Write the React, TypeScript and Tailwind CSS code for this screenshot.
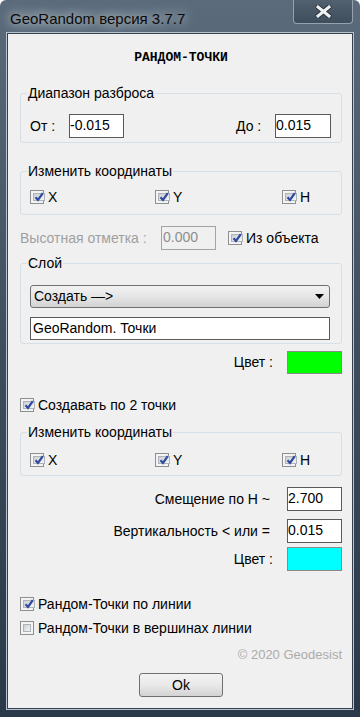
import React from "react";

function Check({ checked = true }: { checked?: boolean }) {
  return (
    <span className="w-[14px] h-[14px] border border-[#8e8f8f] bg-[#f4f4f4] p-[2px] flex shrink-0">
      <span className="flex-1 border border-[#aeb3b9] bg-gradient-to-br from-[#cbcfd5] to-[#f6f6f6] flex items-center justify-center">
        {checked && (
          <svg width="10" height="10" viewBox="0 0 10 10" className="-mt-[1px]">
            <path d="M1.5 5.2 L4 8 L8.8 1.2" fill="none" stroke="#2f4a9e" strokeWidth="2.2" />
          </svg>
        )}
      </span>
    </span>
  );
}

function Group({ title, className, children }: { title: string; className: string; children: React.ReactNode }) {
  return (
    <fieldset className="border border-[#d5dfe5] rounded-[3px]">
      <legend className="ml-[6px] px-[1px] leading-[16px]">{title}</legend>
      <div className={className}>{children}</div>
    </fieldset>
  );
}

function CoordRow() {
  return (
    <div className="flex h-[16px] pl-[9px]">
      <div className="w-[125px] flex items-center gap-[4px]">
        <Check />
        <span>X</span>
      </div>
      <div className="w-[127px] flex items-center gap-[4px]">
        <Check />
        <span>Y</span>
      </div>
      <div className="flex items-center gap-[4px]">
        <Check />
        <span>H</span>
      </div>
    </div>
  );
}

export default function App() {
  return (
    <div className="w-[360px] h-[717px] flex flex-col bg-gradient-to-b from-[#5b6b7b] via-[#3d4d5e] to-[#2a394a] rounded-t-[6px] overflow-hidden font-['Liberation_Sans',Arial,sans-serif] text-[14px] text-black">
      {/* title bar */}
      <div className="h-[32px] flex items-start">
        <div className="pl-[10px] pt-[10px] text-[15px] leading-[18px] text-[#0a0a0a] [text-shadow:0_0_10px_rgba(230,236,242,0.95),0_0_16px_rgba(230,236,242,0.7)]">
          GeoRandom версия 3.7.7
        </div>
        <div className="ml-auto mr-[7px] w-[60px] h-[24px] border border-t-0 border-[#95a3b0] rounded-b-[4px] bg-gradient-to-b from-[#52616f] to-[#3f4e5d] flex items-center justify-center">
          <svg width="17" height="13" viewBox="0 0 17 13">
            <path d="M3 2 L14 11 M14 2 L3 11" stroke="#2a3440" strokeWidth="5" strokeLinecap="round" />
            <path d="M3 2 L14 11 M14 2 L3 11" stroke="#eef0f2" strokeWidth="3" strokeLinecap="square" />
          </svg>
        </div>
      </div>

      {/* client */}
      <div className="mx-[6px] border border-[#b7c4cf]">
        <div className="border border-[#34414f]">
          <div className="h-[674px] bg-[#f0f0f0] flex flex-col pl-[12px] pr-[10px]">
            <div className="mt-[16px] h-[16px] leading-[16px] text-center font-['Liberation_Mono',monospace] font-bold text-[13px]">
              РАНДОМ-ТОЧКИ
            </div>

            <div className="mt-[19px]">
              <Group title="Диапазон разброса" className="pt-[13px] pb-[4px] pl-[9px] pr-[10px]">
                <div className="flex items-center h-[24px]">
                  <span className="w-[39px]">От :</span>
                  <div className="w-[55px] h-[24px] border border-[#5a5a5a] bg-white pt-[2px] leading-[16px]">-0.015</div>
                  <span className="ml-auto w-[39px]">До :</span>
                  <div className="w-[56px] h-[24px] border border-[#5a5a5a] bg-white pt-[2px] leading-[16px]">0.015</div>
                </div>
              </Group>
            </div>

            <div className="mt-[20px]">
              <Group title="Изменить координаты" className="pt-[10px] pb-[9px]">
                <CoordRow />
              </Group>
            </div>

            <div className="mt-[11px] h-[24px] flex items-center">
              <span className="w-[141px] text-[#a0a0a0]">Высотная отметка :</span>
              <div className="w-[55px] h-[24px] border border-[#a3a3a3] pl-[1px] pt-[2px] leading-[16px] text-[#8d8d8d]">0.000</div>
              <div className="ml-[12px] flex items-center gap-[4px]">
                <Check />
                <span>Из объекта</span>
              </div>
            </div>

            <div className="mt-[5px]">
              <Group title="Слой" className="pt-[14px] pb-[3px] pl-[9px] pr-[11px]">
                <div className="h-[23px] border border-[#707070] rounded-[3px] bg-gradient-to-b from-[#f2f2f2] via-[#e6e6e6] to-[#d2d2d2] flex items-center pl-[3px] pr-[5px]">
                  <span>Создать —&gt;</span>
                  <svg width="9" height="5" viewBox="0 0 9 5" className="ml-auto">
                    <path d="M0 0 H9 L4.5 5 Z" fill="#000" />
                  </svg>
                </div>
                <div className="mt-[9px] h-[23px] border border-[#5a5a5a] bg-white pl-[2px] pt-[2px] leading-[16px]">
                  GeoRandom. Точки
                </div>
              </Group>
            </div>

            <div className="mt-[7px] h-[23px] flex items-center justify-end">
              <span>Цвет :</span>
              <div className="ml-[14px] w-[55px] h-[23px] border border-[#8a8a8a] bg-[#00ff00]" />
            </div>

            <div className="mt-[23px] h-[16px] flex items-center gap-[4px]">
              <Check />
              <span>Создавать по 2 точки</span>
            </div>

            <div className="mt-[11px]">
              <Group title="Изменить координаты" className="pt-[12px] pb-[7px]">
                <CoordRow />
              </Group>
            </div>

            <div className="mt-[11px] h-[24px] flex items-center justify-end">
              <span>Смещение по H ~</span>
              <div className="ml-[17px] w-[55px] h-[24px] border border-[#5a5a5a] bg-white pt-[2px] leading-[16px]">2.700</div>
            </div>
            <div className="mt-[8px] h-[24px] flex items-center justify-end">
              <span>Вертикальность &lt; или =</span>
              <div className="ml-[17px] w-[55px] h-[24px] border border-[#5a5a5a] bg-white pt-[2px] leading-[16px]">0.015</div>
            </div>
            <div className="mt-[4px] h-[24px] flex items-center justify-end">
              <span>Цвет :</span>
              <div className="ml-[14px] w-[55px] h-[24px] border border-[#8a8a8a] bg-[#00ffff]" />
            </div>

            <div className="mt-[25px] h-[16px] flex items-center gap-[4px]">
              <Check />
              <span>Рандом-Точки по линии</span>
            </div>
            <div className="mt-[8px] h-[16px] flex items-center gap-[4px]">
              <Check checked={false} />
              <span>Рандом-Точки в вершинах линии</span>
            </div>

            <div className="mt-[11px] h-[16px] leading-[16px] text-right text-[13px] text-[#ababab]">
              © 2020 Geodesist
            </div>

            <button className="mt-[10px] self-center w-[84px] h-[24px] border border-[#707070] rounded-[3px] bg-gradient-to-b from-[#f2f2f2] via-[#e9e9e9] to-[#d3d3d3] leading-[16px]">
              Ok
            </button>
          </div>
        </div>
      </div>
    </div>
  );
}
